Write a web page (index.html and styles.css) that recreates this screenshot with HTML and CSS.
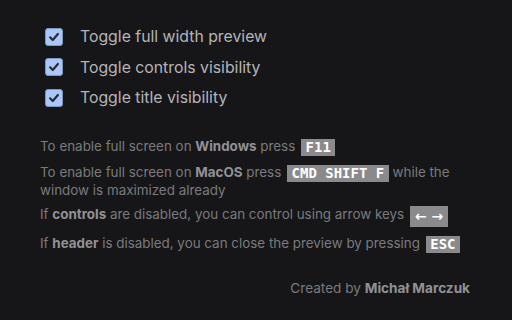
FILE: index.html
```html
<!DOCTYPE html>
<html>
<head>
<meta charset="utf-8">
<link rel="stylesheet" href="styles.css">
</head>
<body>
<div class="panel">
  <div class="toggles">
    <label class="toggle"><span class="box"><svg viewBox="0 0 18 18" width="18" height="18"><path d="M4.6 9.4 L7.6 12.4 L13.4 5.6" fill="none" stroke="#2a2a2e" stroke-width="2.4" stroke-linecap="round" stroke-linejoin="round"/></svg></span><span class="label">Toggle full width preview</span></label>
    <label class="toggle"><span class="box"><svg viewBox="0 0 18 18" width="18" height="18"><path d="M4.6 9.4 L7.6 12.4 L13.4 5.6" fill="none" stroke="#2a2a2e" stroke-width="2.4" stroke-linecap="round" stroke-linejoin="round"/></svg></span><span class="label">Toggle controls visibility</span></label>
    <label class="toggle"><span class="box"><svg viewBox="0 0 18 18" width="18" height="18"><path d="M4.6 9.4 L7.6 12.4 L13.4 5.6" fill="none" stroke="#2a2a2e" stroke-width="2.4" stroke-linecap="round" stroke-linejoin="round"/></svg></span><span class="label">Toggle title visibility</span></label>
  </div>
  <div class="help">
    <p>To enable full screen on <b>Windows</b> press <kbd>F11</kbd></p>
    <p>To enable full screen on <b>MacOS</b> press <kbd>CMD SHIFT F</kbd> while the window is maximized already</p>
    <p>If <b>controls</b> are disabled, you can control using arrow keys <kbd class="arrows">← →</kbd></p>
    <p>If <b>header</b> is disabled, you can close the preview by pressing <kbd>ESC</kbd></p>
  </div>
  <div class="footer">Created by <b>Michał Marczuk</b></div>
</div>
</body>
</html>
```
FILE: styles.css
```css
html, body {
  margin: 0;
  padding: 0;
  background: #161618;
  width: 512px;
  height: 320px;
  overflow: hidden;
}
.panel {
  box-sizing: border-box;
  width: 512px;
  height: 320px;
  padding: 27px 42px 0 40px;
  font-family: Inter, "Noto Sans", sans-serif;
  display: flex;
  flex-direction: column;
}
.toggles {
  display: flex;
  flex-direction: column;
  gap: 11.5px;
  padding-left: 5px;
}
.toggle {
  display: flex;
  align-items: center;
  height: 19px;
  gap: 17px;
  color: #b4b4b8;
  font-size: 15.8px;
}
.box {
  width: 18px;
  height: 18px;
  box-sizing: border-box;
  border-radius: 3px;
  background: #a9c7fb;
  border: 1px solid #7f97c0;
  display: flex;
  align-items: center;
  justify-content: center;
}
.box svg { display: block; }
.help {
  margin-top: 31px;
  display: flex;
  flex-direction: column;
  gap: 7.5px;
  color: #7a7a7e;
  font-size: 13.4px;
  line-height: 17px;
}
.help p { margin: 0; }
.help b { color: #919195; font-weight: 700; }
kbd {
  display: inline-block;
  background: #8a8a8c;
  color: #fff;
  font-family: "DejaVu Sans Mono", monospace;
  font-weight: 700;
  font-size: 14px;
  line-height: 17px;
  padding: 0 4.5px;
  margin-left: 2px;
  vertical-align: -1px;
}
kbd.arrows {
  font-family: "DejaVu Sans", sans-serif;
  line-height: 21px;
  padding: 0 5px;
  vertical-align: -2px;
}
.footer {
  margin-top: 27px;
  text-align: right;
  color: #7a7a7e;
  font-size: 13.6px;
}
.footer b { color: #919195; }
```
